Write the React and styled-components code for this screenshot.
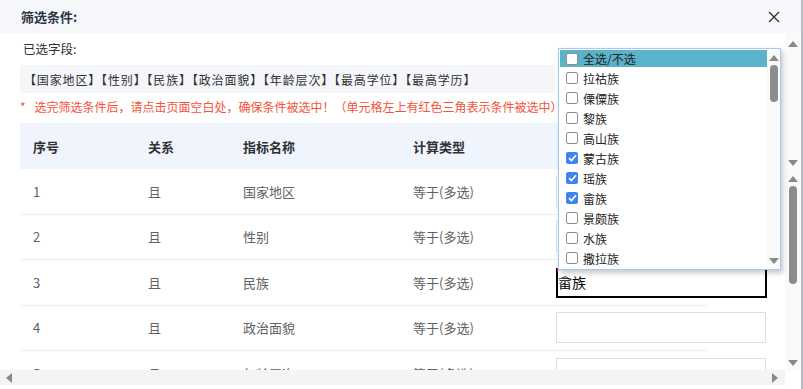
import React from 'react';
import styled, { createGlobalStyle } from 'styled-components';

const GlobalStyle = createGlobalStyle`
  html, body {
    margin: 0;
    padding: 0;
    background: #fff;
  }
  body {
    font-family: "Noto Sans CJK SC", "Liberation Sans", sans-serif;
  }
`;

const Page = styled.div`
  position: relative;
  width: 803px;
  height: 389px;
  box-sizing: border-box;
  border-right: 2px solid #b8bcc4;
  display: flex;
  flex-direction: column;
  overflow: hidden;
  background: #fff;
`;

const Header = styled.div`
  height: 33px;
  flex: none;
  display: flex;
  align-items: center;
  justify-content: space-between;
  padding: 0 21px 0 21px;
  background: #f6f7fb;
`;

const Title = styled.div`
  font-size: 13px;
  font-weight: 700;
  color: #2b3445;
`;

const Middle = styled.div`
  flex: none;
  height: 337px;
  display: flex;
`;

const Content = styled.div`
  flex: 1;
  padding: 8px 0 0 20px;
  overflow: hidden;
`;

const Label = styled.div`
  font-size: 12.5px;
  line-height: 16px;
  color: #303133;
  padding-left: 3px;
`;

const FieldBar = styled.div`
  margin-top: 8px;
  width: 535px;
  height: 28px;
  box-sizing: border-box;
  padding-left: 4px;
  display: flex;
  align-items: center;
  background: #f5f6f9;
  font-size: 12px;
  letter-spacing: 0.85px;
  color: #303133;
  white-space: nowrap;
`;

const Note = styled.div`
  margin-top: 6px;
  font-size: 12px;
  line-height: 16px;
  color: #f4523b;
  white-space: nowrap;
  span {
    margin-right: 9px;
  }
`;

const Table = styled.div`
  margin-top: 8px;
  width: 687px;
  display: grid;
  grid-template-columns: 115px 95px 170px 143px 164px;
`;

const HeadCell = styled.div`
  height: 46px;
  display: flex;
  align-items: center;
  padding-left: 13px;
  background: #f0f5fd;
  font-size: 13px;
  font-weight: 700;
  color: #303133;
`;

const Cell = styled.div`
  height: 45.5px;
  box-sizing: border-box;
  border-bottom: 1px solid #ebeef5;
  display: flex;
  align-items: center;
  padding-left: 13px;
  font-size: 13px;
  color: #606266;
  white-space: nowrap;
`;

const Input = styled.div`
  position: relative;
  flex: none;
  width: ${(p) => (p.focused ? '211px' : '210px')};
  height: ${(p) => (p.focused ? '30px' : '31px')};
  box-sizing: border-box;
  border: ${(p) => (p.focused ? '2px solid #000' : '1px solid #dcdfe6')};
  border-top-width: 1px;
  background: #fff;
  font-size: 14px;
  color: #000;
  line-height: 26px;
  margin-top: ${(p) => (p.focused ? '1px' : '0')};
`;

const RedMark = styled.i`
  position: absolute;
  left: -1px;
  top: -1px;
  width: 0;
  height: 0;
  border-top: 4px solid #e02020;
  border-right: 4px solid transparent;
`;

const VScroll = styled.div`
  flex: none;
  width: 16px;
  display: flex;
  flex-direction: column;
  padding-top: 2px;
  background: #fafafa;
`;

const ScrollTrack = styled.div`
  height: ${(p) => p.h}px;
  display: flex;
  flex-direction: column;
  align-items: center;
  justify-content: space-between;
  padding: 6px 0 4px;
  box-sizing: border-box;
`;

const Arrow = styled.i`
  display: block;
  width: 0;
  height: 0;
  border-left: 5px solid transparent;
  border-right: 5px solid transparent;
  ${(p) => (p.down ? 'border-top: 6px solid #8a8a8a;' : 'border-bottom: 6px solid #8a8a8a;')}
`;

const SideArrow = styled.i`
  display: block;
  width: 0;
  height: 0;
  border-top: 5px solid transparent;
  border-bottom: 5px solid transparent;
  ${(p) => (p.right ? 'border-left: 6px solid #8a8a8a;' : 'border-right: 6px solid #8a8a8a;')}
`;

const Thumb = styled.div`
  width: 8px;
  height: ${(p) => p.h}px;
  border-radius: 4px;
  background: #8c8c8c;
  margin-top: ${(p) => p.top}px;
  margin-bottom: auto;
`;

const HScroll = styled.div`
  flex: none;
  height: 15px;
  width: 785px;
  display: flex;
  align-items: center;
  justify-content: space-between;
  padding: 0 7px 0 6px;
  box-sizing: border-box;
  background: #f4f4f4;
`;

const Dropdown = styled.div`
  position: absolute;
  left: 558px;
  top: 48px;
  width: 223px;
  height: 222px;
  box-sizing: border-box;
  border: 1px solid #a6c8f2;
  background: #fff;
  box-shadow: 2px 3px 5px rgba(0, 0, 0, 0.22);
  display: flex;
`;

const List = styled.div`
  flex: 1;
  padding: 0 0 0 1px;
`;

const Item = styled.div`
  height: 20px;
  display: flex;
  align-items: center;
  padding-left: 6px;
  font-size: 12px;
  color: #222;
  background: ${(p) => (p.active ? '#5ab3c9' : 'transparent')};
  ${(p) => p.active && 'height: 17px; margin: 1px 0 1px;'}
`;

const Box = styled.span`
  flex: none;
  width: 12px;
  height: 12px;
  box-sizing: border-box;
  margin-right: 5px;
  border-radius: 2px;
  border: 1px solid ${(p) => (p.checked ? '#3c86ee' : '#8e8e8e')};
  background: ${(p) => (p.checked ? '#3c86ee' : '#fff')};
  display: flex;
  align-items: center;
  justify-content: center;
`;

const DropScroll = styled.div`
  flex: none;
  width: 13px;
  display: flex;
  flex-direction: column;
  align-items: center;
  padding: 6px 0 5px;
  box-sizing: border-box;
  background: #fafafa;
`;

const nations = [
  { name: '全选/不选', active: true },
  { name: '拉祜族' },
  { name: '傈僳族' },
  { name: '黎族' },
  { name: '高山族' },
  { name: '蒙古族', checked: true },
  { name: '瑶族', checked: true },
  { name: '畲族', checked: true },
  { name: '景颇族' },
  { name: '水族' },
  { name: '撒拉族' },
];

const rows = [
  ['1', '且', '国家地区', '等于(多选)'],
  ['2', '且', '性别', '等于(多选)'],
  ['3', '且', '民族', '等于(多选)', '畲族'],
  ['4', '且', '政治面貌', '等于(多选)'],
  ['5', '且', '年龄层次', '等于(多选)'],
];

function Check() {
  return (
    <svg width="9" height="8" viewBox="0 0 9 8">
      <path d="M1 4.2 L3.4 6.5 L8 1.3" fill="none" stroke="#fff" strokeWidth="1.6" />
    </svg>
  );
}

function App() {
  return (
    <Page>
      <GlobalStyle />
      <Header>
        <Title>筛选条件:</Title>
        <svg width="12" height="12" viewBox="0 0 12 12">
          <path d="M1 1 L11 11 M11 1 L1 11" stroke="#303133" strokeWidth="1.3" />
        </svg>
      </Header>
      <Middle>
        <Content>
          <Label>已选字段:</Label>
          <FieldBar>【国家地区】【性别】【民族】【政治面貌】【年龄层次】【最高学位】【最高学历】</FieldBar>
          <Note>
            <span>*</span>选完筛选条件后，请点击页面空白处，确保条件被选中！（单元格左上有红色三角表示条件被选中）
          </Note>
          <Table>
            <HeadCell>序号</HeadCell>
            <HeadCell>关系</HeadCell>
            <HeadCell>指标名称</HeadCell>
            <HeadCell>计算类型</HeadCell>
            <HeadCell />
            {rows.map((r) => (
              <React.Fragment key={r[0]}>
                <Cell>{r[0]}</Cell>
                <Cell>{r[1]}</Cell>
                <Cell>{r[2]}</Cell>
                <Cell>{r[3]}</Cell>
                <Cell>
                  <Input focused={!!r[4]}>
                    {r[4] && <RedMark />}
                    {r[4]}
                  </Input>
                </Cell>
              </React.Fragment>
            ))}
          </Table>
        </Content>
        <VScroll>
          <ScrollTrack h={135}>
            <Arrow />
            <Arrow down />
          </ScrollTrack>
          <ScrollTrack h={200}>
            <Arrow />
            <Thumb h={98} top={4} />
            <Arrow down />
          </ScrollTrack>
        </VScroll>
      </Middle>
      <HScroll>
        <SideArrow />
        <SideArrow right />
      </HScroll>
      <Dropdown>
        <List>
          {nations.map((n) => (
            <Item key={n.name} active={n.active}>
              <Box checked={n.checked}>{n.checked && <Check />}</Box>
              {n.name}
            </Item>
          ))}
        </List>
        <DropScroll>
          <Arrow />
          <Thumb h={37} top={4} />
          <Arrow down />
        </DropScroll>
      </Dropdown>
    </Page>
  );
}

export default App;
